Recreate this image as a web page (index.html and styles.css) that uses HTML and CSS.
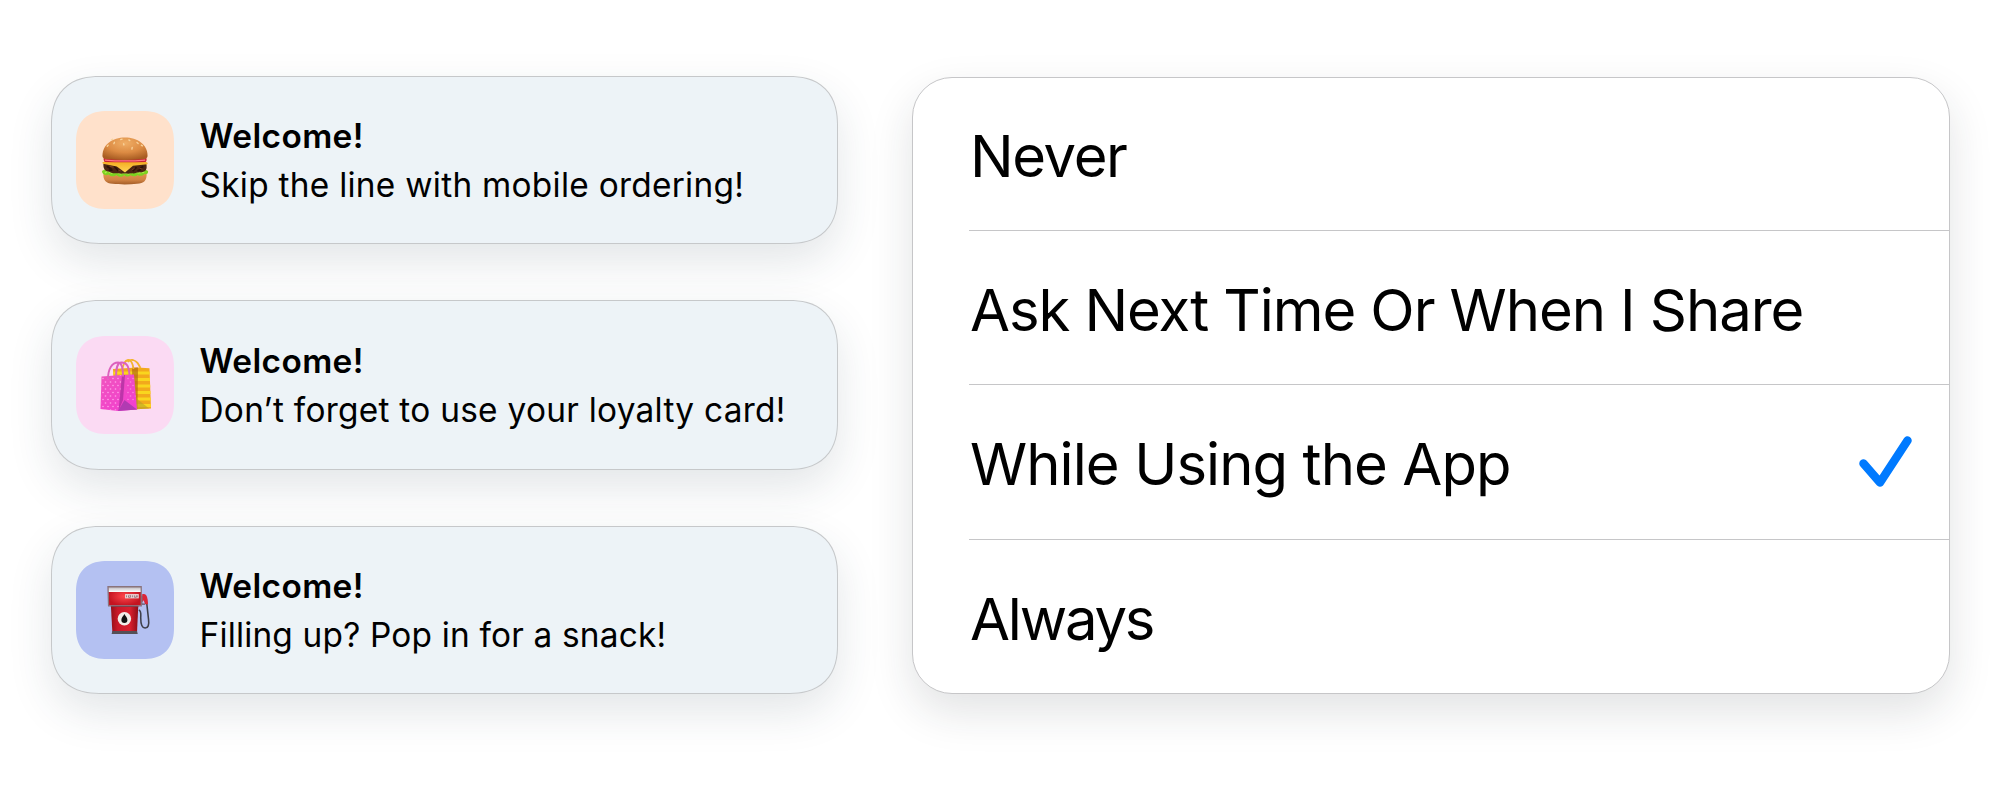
FILE: index.html
```html
<!DOCTYPE html>
<html lang="en">
<head>
<meta charset="utf-8">
<title>Notifications and location access</title>
<link rel="stylesheet" href="styles.css">
</head>
<body>
<main class="page">
  <section class="notices">
    <article class="notice">
      <div class="tile tile-peach">
        <svg class="emoji" viewBox="0 0 50 50" aria-hidden="true">
          <defs>
            <radialGradient id="bun" cx=".5" cy=".25" r=".75"><stop offset="0" stop-color="#f0ae66"/><stop offset=".55" stop-color="#dc8b43"/><stop offset="1" stop-color="#a85c22"/></radialGradient>
            <linearGradient id="heel" x2="0" y2="1"><stop offset="0" stop-color="#e2964e"/><stop offset=".6" stop-color="#d18343"/><stop offset="1" stop-color="#a35d29"/></linearGradient>
            <linearGradient id="cheese" x2="0" y2="1"><stop offset="0" stop-color="#f3a91d"/><stop offset="1" stop-color="#ffd657"/></linearGradient>
          </defs>
          <path d="M2.500 38h45c.5 8-3 11-10 11.300-8 .8-18 .8-25.500 0C5 48.500 2 46 2.500 38z" fill="url(#heel)"/>
          <path d="M1 36l5-3h38l5 3c.5 3-2 4-4 3-2 3-5 2-7 1-2 2-5 2-7 0-2 2.500-5 2-7 0-2 3-6 2-8 0-2 2-6 2-8-.5-3 2-7 0-7-3.500z" fill="#7ed321"/>
          <path d="M4 38l3-2 4 2 4-2 5 3 4-1 5 1 5-3 5 2 6-1" stroke="#b4f04e" stroke-width="1.300" fill="none"/>
          <path d="M2.500 30C2 27 6 26.500 10 27h30c5-.5 8 0 7.500 4 .5 4-2 6-6 6.500-3-.8-6 1.500-9 .8-4 1-7 0-11 .5-5-.4-9 .3-13-2-4-.3-6-3-6-6.800z" fill="#4b2512"/>
          <path d="M6 31l5 3m3-3l4 5m15 0l4-4m3 2l4-3M8 35l4 0m26 1l4-2" stroke="#2b1209" stroke-width="1.800"/>
          <path d="M9 31l4 1m5 3l3 1m11-1l3-2m5 0l3 1" stroke="#7a3f21"/>
          <path d="M1.300 27l4-1.500h40l3.400 2-.4 1.500-15 1.500L25 37.500l-8.500-6.300L2 28.500z" fill="url(#cheese)"/>
          <path d="M3 22h44c1 2 .5 4-.6 4.500-14 .6-29 .6-42.500 0-1.200-1-1.500-3-.9-4.500z" fill="#c91f35"/>
          <path d="M4 24.500c14 1.200 28 1.200 42 0" stroke="#ff7885" stroke-width="1.300" fill="none"/>
          <path d="M1.500 20C1.500 8.500 12 1 25 1s23.500 7.500 23.500 19c0 3-3 3.500-6 3.800-12 1-24 1-35 0-3-.3-6-.8-6-3.800z" fill="url(#bun)"/>
          <g stroke="#f8d39c" stroke-width="1.400" stroke-linecap="round"><path d="M7.500 9l-1 1.200M14 6l-.6 1.500M22 2.800l-1.500.4M29 3.500l1 .8M37.500 6.300l1.200 1M23.600 7.600l.3 1.200M32.500 11.300l-.3 1.800M42 9l1.200.8M12 2.800l-1 .7"/></g>
        </svg>
      </div>
      <div class="copy">
        <h2 class="title">Welcome!</h2>
        <p class="body">Skip the line with mobile ordering!</p>
      </div>
    </article>

    <article class="notice notice-tall">
      <div class="tile tile-pink">
        <svg class="emoji emoji-bags" viewBox="0 0 52 52" aria-hidden="true">
          <defs>
            <linearGradient id="pink" x2=".8" y2="1"><stop offset="0" stop-color="#f055bd"/><stop offset="1" stop-color="#f23fd0"/></linearGradient>
            <pattern id="dots" width="5" height="7" patternUnits="userSpaceOnUse"><circle cx="1.500" cy="2" r=".8" fill="#ff9ee8"/><circle cx="4" cy="5.500" r=".8" fill="#ff9ee8"/></pattern>
            <clipPath id="yellow-bag"><path d="M14 10l24-1.500 12.500.8L52 49.500l-15 .8H16z"/></clipPath>
          </defs>
          <g clip-path="url(#yellow-bag)">
            <path d="M14 8h38v44H14z" fill="#f2a91c"/>
            <path d="M14 14h38M14 20.500h38M14 27h38M14 33.500h38M14 40h38M14 46.500h38" stroke="#f9d61e" stroke-width="3.200"/>
            <path d="M33 8h6l-.5 43H34z" fill="#ad6410" opacity=".65"/>
            <path d="M38 40l-5 11h19z" fill="#b7a227" opacity=".6"/>
          </g>
          <path d="M23 12c1-7 3-10.500 6-11s5 4 5.500 9M29 3c1-2 3-2.300 5-2 4 1 5.500 4 7.500 8" fill="none" stroke="#f2b52f" stroke-width="1.800"/>
          <path d="M2.500 17.500L23 16l12-.5 3 35-19 1.500L1.500 50z" fill="url(#pink)"/>
          <path d="M2.500 17.500L23 16l-3 35.700L1.500 50z" fill="url(#dots)"/>
          <path d="M23 16l3 .1L24 41l-4.500 10.800z" fill="#9f2b98" opacity=".65"/>
          <path d="M28 17l7-.3L37 43l-10-2z" fill="url(#dots)" opacity=".7"/>
          <path d="M25.500 41l12.500 9.500-19 1.500z" fill="#b13bb2"/>
          <path d="M9 20c0-10 4-16.500 10-16.500 4 0 5 7 5 14M17 19c0-10 1-15 5-15.500 6-.5 8 4 8.500 13" fill="none" stroke="#dc62bd" stroke-width="1.900"/>
        </svg>
      </div>
      <div class="copy">
        <h2 class="title">Welcome!</h2>
        <p class="body">Don’t forget to use your loyalty card!</p>
      </div>
    </article>

    <article class="notice">
      <div class="tile tile-blue">
        <svg class="emoji emoji-pump" viewBox="0 0 44 50" aria-hidden="true">
          <defs>
            <radialGradient id="head"><stop offset="0" stop-color="#ff474c"/><stop offset="1" stop-color="#c41421"/></radialGradient>
            <linearGradient id="trunk"><stop offset="0" stop-color="#941019"/><stop offset=".25" stop-color="#c9182a"/><stop offset=".7" stop-color="#d81f2e"/><stop offset="1" stop-color="#8d0d18"/></linearGradient>
            <linearGradient id="cap" x2="0" y2="1"><stop offset="0" stop-color="#bcb9be"/><stop offset="1" stop-color="#fff"/></linearGradient>
          </defs>
          <path d="M32.500 25c3 1 2 5 2 8 0 6 1 10.500 4.500 10.500 3 0 4.300-3 3.500-9L40 12" fill="none" stroke="#3f404b" stroke-width="1.600"/>
          <path d="M36 9c3-1 5 1 5.500 5l.5 5h-3l-1.500-4L36 17z" fill="#dc2638"/>
          <path d="M35.500 10.500v8.500H39" fill="none" stroke="#6c4d60" stroke-width="1.300"/>
          <path d="M4 21h28l-1.300 27H5.500z" fill="url(#trunk)"/>
          <path d="M4 21.200h28" stroke="#730d17" stroke-width="1.500"/>
          <path d="M5.500 46.500h25.200l.8 3H4.700z" fill="#555057"/>
          <path d="M1.200 1.500h33.600L35 20.500H1.500z" fill="url(#head)"/>
          <path d="M1.200 1.500h33.600v5H1.200z" fill="url(#cap)"/>
          <path d="M1 1.200h34l.1 19.500H1.600z" fill="none" stroke="#8a747c" stroke-width="1.300"/>
          <rect x="18.500" y="8.700" width="14" height="4.400" fill="#ead3d5"/>
          <path d="M20 10v2m2-2v2h2v-2h-1m3 0v2m2-2v2h2v-2m1 0v2" fill="none" stroke="#8a6269" stroke-width=".8"/>
          <circle cx="17.800" cy="34" r="6.900" fill="#f1ece8"/>
          <path d="M17.800 29.200c1 2 3.100 3.600 3.100 6a3.100 3.100 0 0 1-6.200 0c0-2.400 2.100-4 3.100-6z" fill="#111"/>
        </svg>
      </div>
      <div class="copy">
        <h2 class="title">Welcome!</h2>
        <p class="body body-snack">Filling up? Pop in for a snack!</p>
      </div>
    </article>
  </section>

  <ul class="options">
    <li class="option"><span class="label label-never">Never</span></li>
    <li class="option"><span class="label label-ask">Ask Next Time Or When I Share</span></li>
    <li class="option"><span class="label label-using">While Using the App</span>
      <svg class="check" viewBox="0 0 54 52" role="img" aria-label="Selected"><path d="M5.500 27.500L22 46.500 49.500 4.500" /></svg>
    </li>
    <li class="option"><span class="label label-always">Always</span></li>
  </ul>
</main>
</body>
</html>
```
FILE: styles.css
```css
* { box-sizing: border-box; margin: 0; padding: 0; }

body {
  background: #fff;
  color: #000;
  font-family: Inter, "Liberation Sans", sans-serif;
}

.page {
  display: flex;
  gap: 74px;
  height: 810px;
  padding: 76px 50px 0 51px;
  overflow: hidden;
}

.notices {
  display: flex;
  flex-direction: column;
  gap: 56px;
  width: 787px;
}

.notice {
  display: flex;
  align-items: flex-start;
  gap: 25.5px;
  height: 168px;
  padding: 34px 24px 0;
  border: 1px solid #c6c8ca;
  border-radius: 42px;
  background: #edf3f7;
  box-shadow: 0 18px 44px rgba(40, 60, 80, .13);
}

.notice-tall { height: 170px; padding-top: 35px; }

.tile {
  display: grid;
  place-items: center;
  flex: none;
  width: 98px;
  height: 98px;
  border-radius: 26px;
}

@supports (corner-shape: squircle) {
  .notice { border-radius: 49px; corner-shape: superellipse(1.25); }
  .tile { border-radius: 31px; corner-shape: superellipse(1.25); }
}

.tile-peach { background: #ffe1cb; }
.tile-pink { background: #fbdaf3; }
.tile-blue { background: #b4c1f2; }

.emoji { width: 48px; height: 49px; }
.emoji-bags { width: 52px; height: 52px; }
.emoji-pump { width: 43px; height: 50px; margin-left: 6px; }

.copy { padding-top: 1px; white-space: nowrap; }

.title {
  font-size: 33.4px;
  font-weight: 600;
  line-height: 49px;
  letter-spacing: .4px;
}

.body {
  font-size: 33.4px;
  line-height: 49px;
  letter-spacing: .27px;
}

.body-snack { letter-spacing: .18px; }

.options {
  display: flex;
  flex-direction: column;
  width: 1038px;
  height: 617px;
  margin-top: 1px;
  padding-left: 56px;
  border: 1px solid #c6c6c8;
  border-radius: 40px;
  background: #fff;
  box-shadow: 0 18px 44px rgba(30, 35, 50, .13);
  list-style: none;
}

.option {
  display: flex;
  align-items: center;
  justify-content: space-between;
  height: 154px;
  padding: 4px 37px 0 1px;
}

.option:first-child { height: 152px; }
.option:nth-child(3) { height: 155px; }

.option + .option { border-top: 1px solid #c6c6c8; }

.label {
  font-size: 58px;
  line-height: 70px;
  white-space: nowrap;
}

.label-never { letter-spacing: -1.4px; }
.label-ask { letter-spacing: -1.08px; }
.label-using { letter-spacing: -.92px; }
.label-always { letter-spacing: -2.2px; }

.check {
  width: 54px;
  height: 52px;
  margin-bottom: 4px;
  fill: none;
  stroke: #007aff;
  stroke-width: 8.500;
  stroke-linecap: round;
  stroke-linejoin: round;
}
```
